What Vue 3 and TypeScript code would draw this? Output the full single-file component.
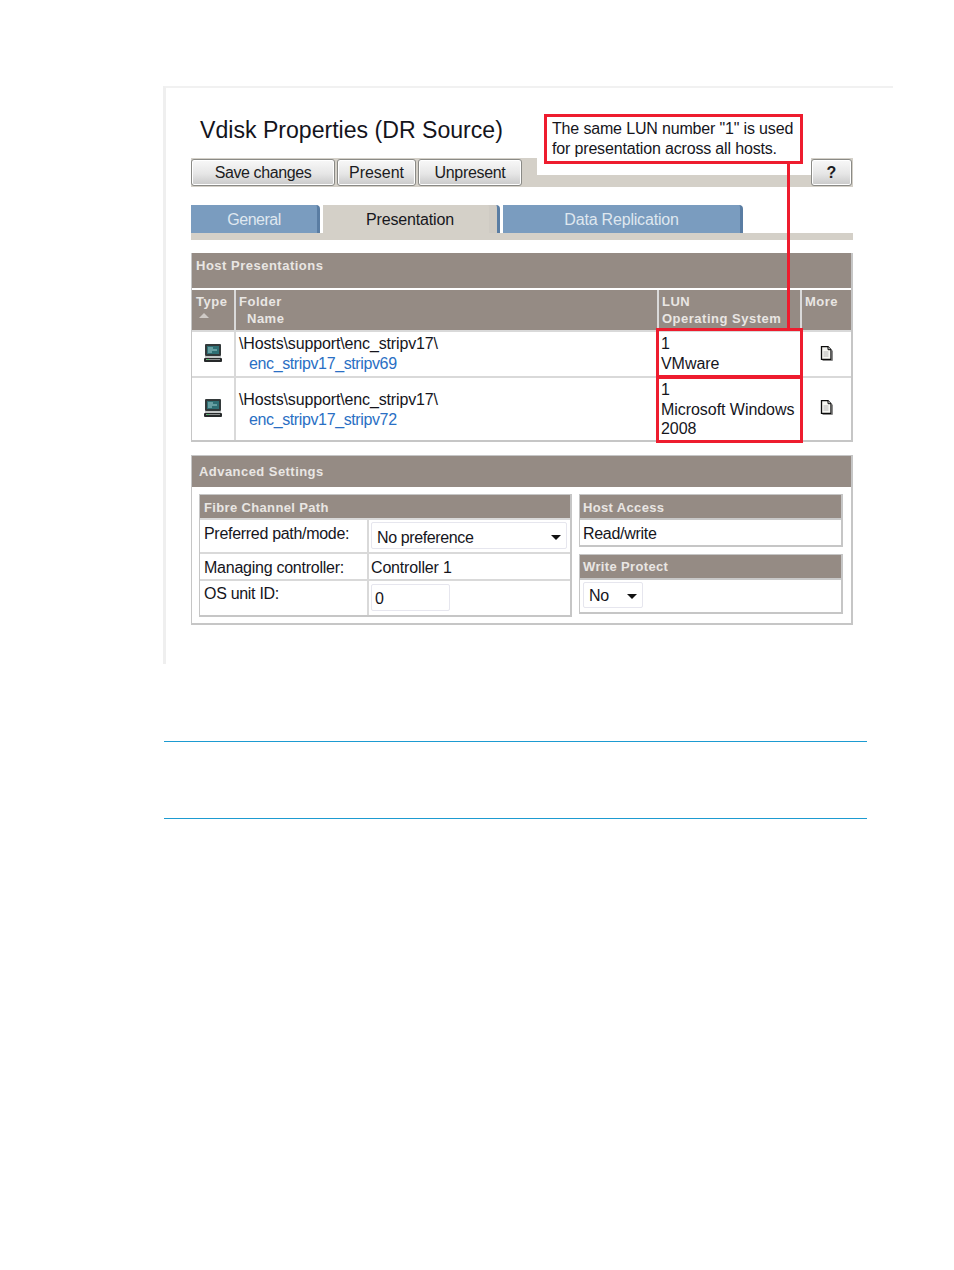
<script setup lang="ts">
const hosts = [
  { link: 'enc_stripv17_stripv69', lines: ['1', 'VMware'], cls: 'row-a' },
  { link: 'enc_stripv17_stripv72', lines: ['1', 'Microsoft Windows', '2008'], cls: 'row-b' },
]
</script>

<template>
  <div class="page">
    <section class="panel">
      <h1 class="title">Vdisk Properties (DR Source)</h1>

      <div class="toolbar">
        <button class="btn save">Save changes</button>
        <button class="btn present">Present</button>
        <button class="btn unpresent">Unpresent</button>
        <span class="notch"></span>
        <button class="btn help">?</button>
      </div>

      <div class="tabs">
        <div class="tab general">General</div>
        <div class="tab active">Presentation</div>
        <div class="tab replication">Data Replication</div>
      </div>
      <div class="tabstrip"></div>

      <div class="hosts">
        <div class="box-head">Host Presentations</div>
        <div class="grid cols">
          <div class="th type">Type<span class="sort"></span></div>
          <div class="th">Folder<br /><span class="ind">Name</span></div>
          <div class="th">LUN<br />Operating System</div>
          <div class="th">More</div>
        </div>
        <div v-for="h in hosts" :key="h.link" class="grid row" :class="h.cls">
          <div class="td icon">
            <svg width="18" height="18" viewBox="0 0 18 18">
              <rect x="1" y="0" width="16" height="12" rx="1" fill="#33393a" />
              <rect x="3" y="2" width="12" height="8" fill="#2f6f74" />
              <path d="M4 4h5M4 6h9M4 8h4" stroke="#9fd0d0" stroke-width="1" />
              <rect x="1" y="12" width="16" height="2" fill="#c4c7c7" />
              <rect x="0" y="14" width="18" height="4" rx="1" fill="#26292a" />
              <path d="M2 15.500h14" stroke="#8c9090" stroke-width="1" />
              <path d="M3 15.500h2" stroke="#4fbf6a" stroke-width="1" />
            </svg>
          </div>
          <div class="td path">
            <div>\Hosts\support\enc_stripv17\</div>
            <div class="link">{{ h.link }}</div>
          </div>
          <div class="td lun">
            <div v-for="l in h.lines" :key="l">{{ l }}</div>
          </div>
          <div class="td icon">
            <svg width="13" height="15" viewBox="0 0 13 15">
              <path d="M1.500 .7h6.500l3 3v9.600h-9.500z" fill="#f6f6f2" stroke="#0c0c0c" stroke-width="1.300" />
              <path d="M8 .7v3h3" fill="#ddd" stroke="#0c0c0c" stroke-width="1" />
              <path d="M3.500 6h5M3.500 8h5M3.500 10h5" stroke="#b4b4b4" stroke-width="1" />
              <path d="M12.500 4.500v10h-10" fill="none" stroke="#8a8a8a" stroke-width="1" />
            </svg>
          </div>
        </div>
      </div>

      <div class="advanced">
        <div class="adv-head">Advanced Settings</div>
        <div class="adv-body">
          <div class="fibre">
            <div class="sub-head">Fibre Channel Path</div>
            <div class="f-row f1">
              <div class="f-label">Preferred path/mode:</div>
              <div class="f-val">
                <div class="select wide">No preference<span class="caret"></span></div>
              </div>
            </div>
            <div class="f-row f2">
              <div class="f-label managing">Managing controller:</div>
              <div class="f-val plain">Controller 1</div>
            </div>
            <div class="f-row f3">
              <div class="f-label">OS unit ID:</div>
              <div class="f-val"><div class="input">0</div></div>
            </div>
          </div>
          <div class="side">
            <div class="side-box access">
              <div class="sub-head">Host Access</div>
              <div class="side-text">Read/write</div>
            </div>
            <div class="side-box protect">
              <div class="sub-head">Write Protect</div>
              <div class="side-ctl">
                <div class="select small">No<span class="caret"></span></div>
              </div>
            </div>
          </div>
        </div>
      </div>

      <!-- Annotations drawn over the screenshot -->
      <div class="callout">The same LUN number "1" is used<br />for presentation across all hosts.</div>
      <div class="connector"></div>
      <div class="mark mark-a"></div>
      <div class="mark mark-b"></div>
    </section>

    <div class="note"></div>
  </div>
</template>

<style>
html, body { margin: 0; background: #fff; }
</style>

<style scoped>
.page {
  height: 1270px;
  box-sizing: border-box;
  padding: 86px 0 0 163px;
  background: #fff;
  overflow: hidden;
  font-family: "Liberation Sans", Arial, sans-serif;
  font-size: 16px;
  color: #15151c;
}
.panel {
  position: relative;
  width: 730px;
  height: 578px;
  box-sizing: border-box;
  border-top: 2px solid #f1f1f1;
  border-left: 3px solid #efefef;
  padding: 0 40px 0 25px;
}
.title {
  margin: 0;
  height: 70px;
  box-sizing: border-box;
  padding: 28px 0 0 9px;
  font-size: 23.100px;
  line-height: 28px;
  font-weight: 400;
  color: #14141c;
}
.toolbar {
  position: relative;
  display: flex;
  height: 29px;
  background: #d4d0c8;
  gap: 2px;
  padding-top: 1px;
  box-sizing: border-box;
}
.btn {
  height: 27px;
  padding: 0;
  font: inherit;
  color: #1c1c22;
  border: 1px solid #8a8a86;
  border-radius: 3px;
  background: linear-gradient(#f8f8f8, #e6e6e6 55%, #c9c9c9);
  box-shadow: inset 0 0 0 1px #fff;
}
.save { width: 144px; letter-spacing: -.4px; }
.present { width: 79px; letter-spacing: -.05px; }
.unpresent { width: 104px; letter-spacing: -.33px; }
.help {
  position: absolute;
  right: 1px;
  top: 1px;
  width: 41px;
  font-weight: 700;
}
.notch {
  position: absolute;
  left: 346px;
  top: 0;
  width: 274px;
  height: 17px;
  background: #fff;
}
.tabs {
  display: flex;
  gap: 3px;
  margin-top: 18px;
  height: 28px;
}
.tab {
  box-sizing: border-box;
  text-align: center;
  line-height: 29px;
  color: #dfe7ef;
  background: #7a9cbf;
  border-right: 3px solid #5a7da3;
  border-top-right-radius: 4px;
}
.general { width: 129px; letter-spacing: -.5px; }
.active {
  width: 177px;
  color: #17171d;
  background: #d4d0c8;
  border-right-color: #5a7da3;
  box-shadow: inset -8px 0 0 #cfcbc4;
  letter-spacing: -.17px;
}
.replication { width: 240px; letter-spacing: -.19px; }
.tabstrip {
  height: 7px;
  background: #d4d0c8;
}
.hosts {
  margin-top: 13px;
  border: 1px solid #c6c6c6;
  border-top-width: 0;
  border-right-width: 2px;
  border-bottom-width: 2px;
  height: 189px;
  box-sizing: border-box;
}
.box-head {
  height: 35px;
  box-sizing: border-box;
  padding: 5px 0 0 4px;
  background: #958b84;
  color: #e9e6e3;
  font-size: 13px;
  line-height: 16px;
  font-weight: 700;
  letter-spacing: .5px;
}
.grid {
  display: grid;
  grid-template-columns: 42px 421px 141px 1fr;
  column-gap: 2px;
}
.cols {
  margin-top: 2px;
  height: 40px;
  background: #d9d9d9;
}
.th {
  background: #958b84;
  color: #e9e6e3;
  font-size: 13px;
  line-height: 17px;
  font-weight: 700;
  letter-spacing: .5px;
  padding: 3px 0 0 3px;
}
.type { position: relative; padding-left: 4px; }
.sort {
  position: absolute;
  left: 7px;
  top: 23px;
  width: 0;
  height: 0;
  border-left: 5px solid transparent;
  border-right: 5px solid transparent;
  border-bottom: 5px solid #cfcac6;
}
.ind { padding-left: 8px; }
.row {
  border-top: 2px solid #d9d9d9;
  background: #d9d9d9;
}
.row-a { height: 44px; }
.row-b { height: 62px; }
.td {
  background: #fff;
  line-height: 20px;
}
.icon {
  display: flex;
  align-items: center;
  justify-content: center;
}
.row .icon { padding-bottom: 2px; box-sizing: border-box; }
.row-b .icon { padding-bottom: 3px; }
.path { padding: 2px 0 0 3px; letter-spacing: -.14px; }
.row-b .path { padding-top: 12px; }
.link { padding-left: 10px; color: #2a6fc4; letter-spacing: -.38px; }
.lun { padding: 2px 0 0 2px; letter-spacing: -.05px; }
.row-b .lun { padding-top: 2px; line-height: 19.500px; }
.advanced {
  margin-top: 13px;
  height: 170px;
  box-sizing: border-box;
  border: 1px solid #c6c6c6;
  border-width: 0 2px 2px 1px;
}
.adv-head {
  height: 32px;
  box-sizing: border-box;
  padding: 8px 0 0 7px;
  background: #958b84;
  border-top: 1px solid #c6c6c6;
  color: #e9e6e3;
  font-size: 13px;
  line-height: 16px;
  font-weight: 700;
  letter-spacing: .45px;
}
.adv-body {
  display: flex;
  gap: 7px;
  padding: 7px 0 0 7px;
}
.fibre {
  width: 373px;
  height: 123px;
  box-sizing: border-box;
  border: 1px solid #c6c6c6;
  border-width: 1px 2px 2px 1px;
}
.sub-head {
  height: 23px;
  box-sizing: border-box;
  padding: 5px 0 0 3px;
  background: #958b84;
  color: #e9e6e3;
  font-size: 13px;
  line-height: 16px;
  font-weight: 700;
  letter-spacing: .35px;
}
.fibre .sub-head { padding-left: 4px; }
.f-row {
  display: grid;
  grid-template-columns: 167px 1fr;
  column-gap: 2px;
  border-top: 2px solid #d9d9d9;
  background: #d9d9d9;
}
.f1 { height: 32px; }
.f2 { height: 25px; }
.f3 { height: 34px; }
.f-label, .f-val { background: #fff; }
.f-label { padding: 4px 0 0 4px; line-height: 20px; letter-spacing: -.3px; }
.managing { letter-spacing: -.25px; }
.f3 .f-label { padding-top: 3px; }
.f-val { padding: 2px 3px 0 2px; box-sizing: border-box; }
.plain { padding-top: 4px; line-height: 20px; letter-spacing: -.17px; }
.select {
  position: relative;
  box-sizing: border-box;
  height: 27px;
  border: 1px solid #e6e6ee;
  border-radius: 2px;
  padding-left: 5px;
  line-height: 29px;
  letter-spacing: -.38px;
}
.caret {
  position: absolute;
  top: 12px;
  right: 5px;
  width: 0;
  height: 0;
  border-left: 5px solid transparent;
  border-right: 5px solid transparent;
  border-top: 5px solid #111;
}
.input {
  box-sizing: border-box;
  width: 79px;
  height: 27px;
  margin-top: 1px;
  border: 1px solid #e6e6ee;
  border-radius: 2px;
  padding-left: 3px;
  line-height: 27px;
}
.side {
  display: flex;
  flex-direction: column;
  gap: 7px;
  width: 264px;
}
.side-box {
  box-sizing: border-box;
  border: 1px solid #c6c6c6;
  border-width: 1px 2px 2px 1px;
}
.side-box .sub-head { border-bottom: 2px solid #c8c8c8; height: 25px; }
.access { height: 53px; }
.protect { height: 60px; }
.protect .sub-head { padding-top: 4px; }
.side-text { padding: 4px 0 0 3px; line-height: 20px; letter-spacing: -.3px; }
.side-ctl { padding: 2px 0 0 3px; }
.small { width: 60px; height: 26px; line-height: 26px; }
.small .caret { top: 11px; }
.callout {
  position: absolute;
  left: 378px;
  top: 26px;
  width: 259px;
  height: 50px;
  box-sizing: border-box;
  border: 3px solid #ee1c2e;
  background: #fff;
  padding: 2px 0 0 5px;
  line-height: 19.500px;
  letter-spacing: -.16px;
}
.connector {
  position: absolute;
  left: 621px;
  top: 76px;
  width: 3px;
  height: 165px;
  background: #ee1c2e;
}
.mark {
  position: absolute;
  left: 490px;
  width: 147px;
  box-sizing: border-box;
  border: 3px solid #ee1c2e;
}
.mark-a { top: 240px; height: 50px; }
.mark-b { top: 288px; height: 67px; }
.note {
  box-sizing: border-box;
  width: 703px;
  height: 78px;
  margin: 77px 0 0 1px;
  border-top: 1px solid #1d9bd1;
  border-bottom: 1px solid #1d9bd1;
}
</style>
